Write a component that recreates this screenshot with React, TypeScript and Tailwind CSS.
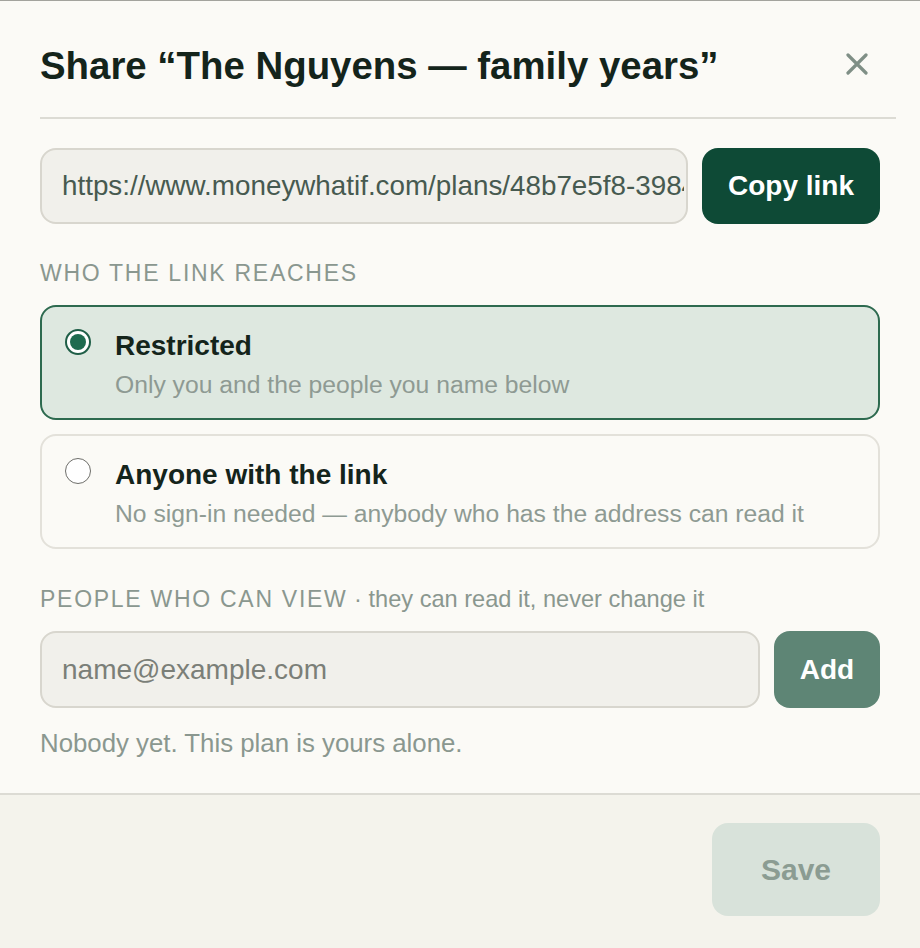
import React, { useState } from "react";

type Reach = "restricted" | "anyone";

const options: { id: Reach; title: string; desc: string }[] = [
  { id: "restricted", title: "Restricted", desc: "Only you and the people you name below" },
  { id: "anyone", title: "Anyone with the link", desc: "No sign-in needed — anybody who has the address can read it" },
];

const CloseIcon = () => (
  <svg width="22" height="22" viewBox="0 0 22 22" fill="none">
    <path d="M2 2L20 20M20 2L2 20" stroke="#7f8f86" strokeWidth="3.2" strokeLinecap="round" />
  </svg>
);

const Radio: React.FC<{ checked: boolean }> = ({ checked }) =>
  checked ? (
    <span className="flex h-[26px] w-[26px] shrink-0 items-center justify-center rounded-full border-2 border-[#1f5e47] bg-white">
      <span className="h-[16px] w-[16px] rounded-full bg-[#1e6b4f]" />
    </span>
  ) : (
    <span className="h-[26px] w-[26px] shrink-0 rounded-full border-[1.5px] border-[#6e6e6a] bg-white" />
  );

export default function App() {
  const [reach, setReach] = useState<Reach>("restricted");
  const [email, setEmail] = useState("");

  return (
    <div className="flex min-h-screen w-full flex-col border-t border-[#a3a39d] bg-[#fbfaf6] font-['Liberation_Sans',Arial,sans-serif]">
      {/* header */}
      <div className="ml-10 mr-6 flex items-start justify-between border-b-2 border-[#dcdbd4] pt-[42px] pb-[28px]">
        <h1 className="text-[38.4px] font-bold leading-[46px] text-[#14241b]">
          Share “The Nguyens — family years”
        </h1>
        <button className="mt-[10px] mr-[28px] flex h-[22px] w-[22px] items-center justify-center">
          <CloseIcon />
        </button>
      </div>

      {/* body */}
      <div className="px-10 pb-[32px]">
        <div className="mt-[29px] flex gap-[14px]">
          <div className="flex h-[76px] min-w-0 flex-1 items-center rounded-[16px] border-2 border-[#d8d6ce] bg-[#f1f0eb] pl-[20px] pr-[2px]">
            <span className="block min-w-0 flex-1 overflow-hidden whitespace-nowrap text-[27.8px] text-[#475a50]">
              https://www.moneywhatif.com/plans/48b7e5f8-3984-4c1a-9e2d-7a6b1f0c3e55
            </span>
          </div>
          <button className="h-[76px] w-[178px] shrink-0 rounded-[16px] bg-[#0e4a36] text-[28px] font-bold text-white">
            Copy link
          </button>
        </div>

        <div className="mt-[35px] text-[23px] uppercase leading-[28px] tracking-[0.075em] text-[#8a978f]">
          Who the link reaches
        </div>

        <div className="mt-[18px] flex flex-col gap-[14px]">
          {options.map((o) => {
            const on = reach === o.id;
            return (
              <div
                key={o.id}
                onClick={() => setReach(o.id)}
                className={
                  on
                    ? "flex h-[115px] cursor-pointer gap-[24px] rounded-[16px] border-2 border-[#2d6a4f] bg-[#dee8e0] pt-[22px] pl-[23px]"
                    : "flex h-[115px] cursor-pointer gap-[24px] rounded-[16px] border-2 border-[#e3e1da] bg-[#fbfaf6] pt-[22px] pl-[23px]"
                }
              >
                <Radio checked={on} />
                <div className="-mt-[1px]">
                  <div className="text-[28px] font-bold leading-[36px] text-[#14241b]">{o.title}</div>
                  <div className="mt-[3px] text-[24.7px] leading-[36px] text-[#8e9a93]">{o.desc}</div>
                </div>
              </div>
            );
          })}
        </div>

        <div className="mt-[36px] text-[23px] leading-[28px] text-[#8a978f]">
          <span className="uppercase tracking-[0.075em]">People who can view</span>
          <span className="text-[23.6px]"> · they can read it, never change it</span>
        </div>

        <div className="mt-[18px] flex gap-[14px]">
          <input
            value={email}
            onChange={(e) => setEmail(e.target.value)}
            placeholder="name@example.com"
            className="h-[77px] min-w-0 flex-1 rounded-[16px] border-2 border-[#d8d6ce] bg-[#f1f0eb] px-[20px] text-[28px] text-[#475a50] outline-none placeholder:text-[#7b7f78]"
          />
          <button className="h-[77px] w-[106px] shrink-0 rounded-[16px] bg-[#5e8575] text-[28px] font-bold text-white">
            Add
          </button>
        </div>

        <p className="mt-[18px] text-[25.8px] leading-[35px] text-[#8a978f]">
          Nobody yet. This plan is yours alone.
        </p>
      </div>

      {/* footer */}
      <div className="flex flex-1 justify-end border-t-2 border-[#dcdbd4] bg-[#f4f3ec] px-10 pt-[28px] pb-[32px]">
        <button className="h-[93px] w-[168px] rounded-[16px] bg-[#d8e2da] text-[30px] font-bold text-[#8b9c92]">
          Save
        </button>
      </div>
    </div>
  );
}
